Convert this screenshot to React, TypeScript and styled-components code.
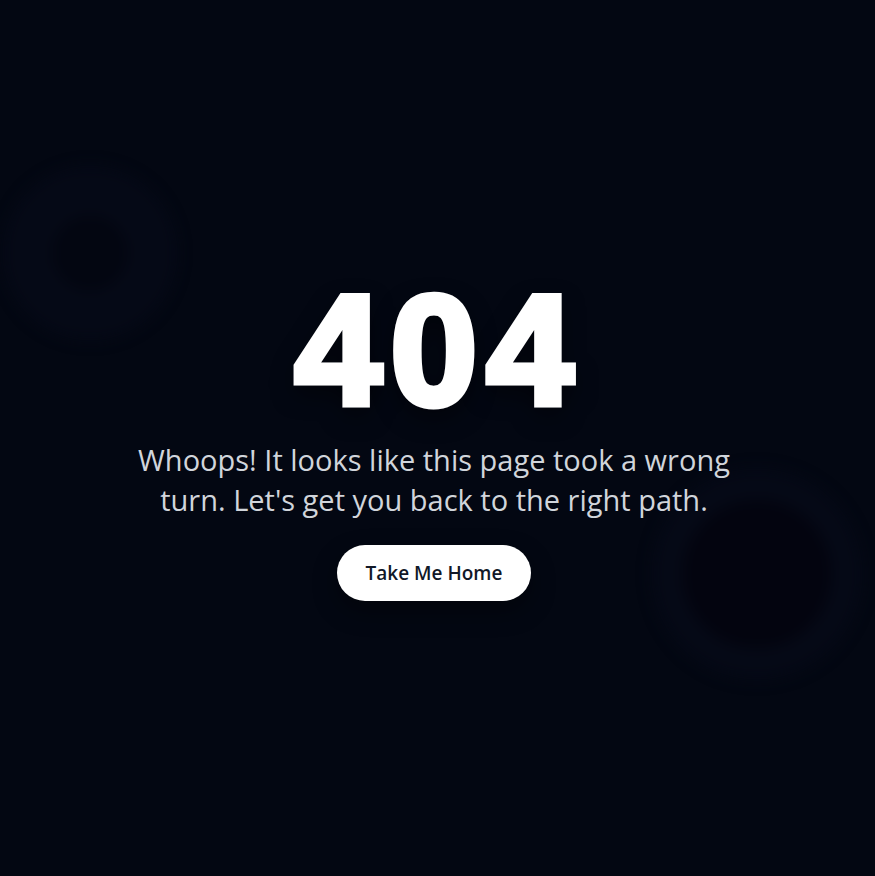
import React from "react";
import styled, { createGlobalStyle } from "styled-components";

const GlobalStyle = createGlobalStyle`
  html, body { margin: 0; padding: 0; background: #030712; }
  * { box-sizing: border-box; }
`;

const Page = styled.main`
  position: relative;
  overflow: hidden;
  min-height: 876px;
  display: flex;
  align-items: center;
  justify-content: center;
  padding-right: 7px;
  background: #030712;
  font-family: "Open Sans", "Noto Sans", sans-serif;
`;

const Blob = styled.div<{ $x: number; $y: number; $size: number; $inner: number; $core: string; $ring: string }>`
  position: absolute;
  left: ${(p) => p.$x - p.$size / 2}px;
  top: ${(p) => p.$y - p.$size / 2}px;
  width: ${(p) => p.$size}px;
  height: ${(p) => p.$size}px;
  border-radius: 50%;
  background: radial-gradient(
    circle closest-side,
    ${(p) => p.$core} 0%,
    ${(p) => p.$core} ${(p) => p.$inner}%,
    ${(p) => p.$ring} ${(p) => p.$inner + 10}%,
    ${(p) => p.$ring} 90%,
    rgba(3, 7, 18, 0) 100%
  );
  filter: blur(6px);
`;

const Content = styled.section`
  position: relative;
  display: flex;
  flex-direction: column;
  align-items: center;
  text-align: center;
  padding-bottom: 3px;
`;

const Code = styled.h1`
  margin: 0;
  font-family: "Liberation Sans", Arial, sans-serif;
  font-weight: 700;
  font-size: 156px;
  line-height: 1;
  letter-spacing: 9px;
  padding-left: 9px;
  color: #ffffff;
  -webkit-text-stroke: 7px #ffffff;
  text-shadow: 0 10px 24px rgba(0, 0, 0, 0.6);
`;

const Message = styled.p`
  margin: 12px 0 0;
  max-width: 620px;
  font-family: "Open Sans", "Noto Sans", sans-serif;
  font-size: 29px;
  line-height: 40px;
  color: #d1d5db;
`;

const HomeButton = styled.a`
  margin-top: 25px;
  display: inline-flex;
  align-items: center;
  justify-content: center;
  width: 194px;
  height: 56px;
  border-radius: 28px;
  background: #ffffff;
  color: #111827;
  font-family: "Open Sans", "Noto Sans", sans-serif;
  font-size: 19px;
  font-weight: 600;
  text-decoration: none;
  box-shadow: 0 10px 25px rgba(0, 0, 0, 0.4);
`;

export default function App() {
  return (
    <>
      <GlobalStyle />
      <Page>
        <Blob $x={90} $y={253} $size={184} $inner={36} $core="#030611" $ring="#050916" />
        <Blob $x={757} $y={574} $size={222} $inner={62} $core="#03040f" $ring="#050916" />
        <Content>
          <Code>404</Code>
          <Message>
            Whoops! It looks like this page took a wrong turn. Let's get you back to the right path.
          </Message>
          <HomeButton href="#">Take Me Home</HomeButton>
        </Content>
      </Page>
    </>
  );
}
